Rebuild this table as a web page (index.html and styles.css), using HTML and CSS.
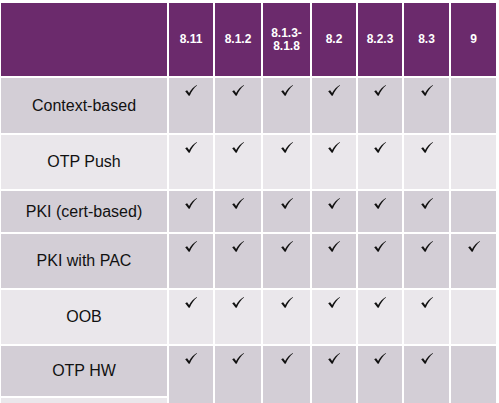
FILE: index.html
```html
<!DOCTYPE html>
<html>
<head>
<meta charset="utf-8">
<link rel="stylesheet" href="styles.css">
</head>
<body>
<svg class="defs" width="0" height="0" aria-hidden="true">
  <symbol id="chk" viewBox="0 0 12 11">
    <path d="M0.2 6.2 L2.1 5.2 L4.1 7.9 C6 4.6 8.8 1.6 11.8 0 L12 0.5 C9.3 2.5 6.6 6.2 4.7 10.8 L3.7 10.8 Z"/>
  </symbol>
</svg>
<div class="grid">
  <div class="hd label"></div>
  <div class="hd">8.11</div>
  <div class="hd">8.1.2</div>
  <div class="hd">8.1.3-<br>8.1.8</div>
  <div class="hd">8.2</div>
  <div class="hd">8.2.3</div>
  <div class="hd">8.3</div>
  <div class="hd">9</div>

  <div class="label dark">Context-based</div>
  <div class="cell dark"><svg class="ck"><use href="#chk"/></svg></div>
  <div class="cell dark"><svg class="ck"><use href="#chk"/></svg></div>
  <div class="cell dark"><svg class="ck"><use href="#chk"/></svg></div>
  <div class="cell dark"><svg class="ck"><use href="#chk"/></svg></div>
  <div class="cell dark"><svg class="ck"><use href="#chk"/></svg></div>
  <div class="cell dark"><svg class="ck"><use href="#chk"/></svg></div>
  <div class="cell dark"></div>

  <div class="label light">OTP Push</div>
  <div class="cell light"><svg class="ck"><use href="#chk"/></svg></div>
  <div class="cell light"><svg class="ck"><use href="#chk"/></svg></div>
  <div class="cell light"><svg class="ck"><use href="#chk"/></svg></div>
  <div class="cell light"><svg class="ck"><use href="#chk"/></svg></div>
  <div class="cell light"><svg class="ck"><use href="#chk"/></svg></div>
  <div class="cell light"><svg class="ck"><use href="#chk"/></svg></div>
  <div class="cell light"></div>

  <div class="label dark">PKI (cert-based)</div>
  <div class="cell dark"><svg class="ck"><use href="#chk"/></svg></div>
  <div class="cell dark"><svg class="ck"><use href="#chk"/></svg></div>
  <div class="cell dark"><svg class="ck"><use href="#chk"/></svg></div>
  <div class="cell dark"><svg class="ck"><use href="#chk"/></svg></div>
  <div class="cell dark"><svg class="ck"><use href="#chk"/></svg></div>
  <div class="cell dark"><svg class="ck"><use href="#chk"/></svg></div>
  <div class="cell dark"></div>

  <div class="label dark">PKI with PAC</div>
  <div class="cell dark"><svg class="ck"><use href="#chk"/></svg></div>
  <div class="cell dark"><svg class="ck"><use href="#chk"/></svg></div>
  <div class="cell dark"><svg class="ck"><use href="#chk"/></svg></div>
  <div class="cell dark"><svg class="ck"><use href="#chk"/></svg></div>
  <div class="cell dark"><svg class="ck"><use href="#chk"/></svg></div>
  <div class="cell dark"><svg class="ck"><use href="#chk"/></svg></div>
  <div class="cell dark"><svg class="ck"><use href="#chk"/></svg></div>

  <div class="label light">OOB</div>
  <div class="cell light"><svg class="ck"><use href="#chk"/></svg></div>
  <div class="cell light"><svg class="ck"><use href="#chk"/></svg></div>
  <div class="cell light"><svg class="ck"><use href="#chk"/></svg></div>
  <div class="cell light"><svg class="ck"><use href="#chk"/></svg></div>
  <div class="cell light"><svg class="ck"><use href="#chk"/></svg></div>
  <div class="cell light"><svg class="ck"><use href="#chk"/></svg></div>
  <div class="cell light"></div>

  <div class="label last">OTP HW</div>
  <div class="cell dark"><svg class="ck"><use href="#chk"/></svg></div>
  <div class="cell dark"><svg class="ck"><use href="#chk"/></svg></div>
  <div class="cell dark"><svg class="ck"><use href="#chk"/></svg></div>
  <div class="cell dark"><svg class="ck"><use href="#chk"/></svg></div>
  <div class="cell dark"><svg class="ck"><use href="#chk"/></svg></div>
  <div class="cell dark"><svg class="ck"><use href="#chk"/></svg></div>
  <div class="cell dark"></div>
</div>
</body>
</html>
```
FILE: styles.css
```css
html, body {
  margin: 0;
  padding: 0;
  background: #ffffff;
  width: 499px;
  height: 403px;
  overflow: hidden;
}
.defs {
  display: block;
  width: 0;
  height: 0;
}
.grid {
  margin: 3px 3px 0 1px;
  display: grid;
  grid-template-columns: 166px 44px 46px 47px 44px 44px 45px 45px;
  grid-template-rows: 73px 55px 54px 41px 54px 54px 57px;
  gap: 2px;
  font-family: "Liberation Sans", Arial, sans-serif;
}
.hd {
  background: #6b2a6c;
  color: #ffffff;
  font-weight: bold;
  font-size: 12px;
  line-height: 13px;
  display: flex;
  align-items: center;
  justify-content: center;
  text-align: center;
}
.label {
  display: flex;
  align-items: center;
  justify-content: center;
  font-size: 16px;
  color: #111111;
}
.hd.label {
  background: #6b2a6c;
}
.cell {
  display: flex;
  justify-content: center;
  align-items: flex-start;
  padding-top: 7px;
  box-sizing: border-box;
}
.dark {
  background: #d3ced6;
}
.light {
  background: #eae7eb;
}
.last {
  background: linear-gradient(to bottom, #d3ced6 0, #d3ced6 50px, #ffffff 50px, #ffffff 52px, #eae7eb 52px);
  padding-bottom: 7px;
  box-sizing: border-box;
}
.ck {
  width: 12px;
  height: 11px;
  fill: #111111;
}
```
